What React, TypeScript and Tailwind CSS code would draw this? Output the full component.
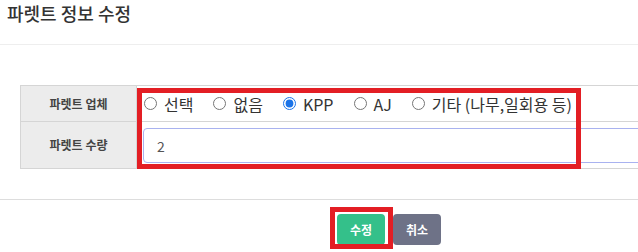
import React from "react";

const font = { fontFamily: '"Noto Sans CJK KR", "Noto Sans", sans-serif' };

function Radio({ label, checked }: { label: string; checked?: boolean }) {
  return (
    <label className="flex items-center mr-[20px]">
      <input
        type="radio"
        name="vendor"
        defaultChecked={checked}
        className="m-0 w-[13px] h-[13px] accent-[#1a73e8]"
      />
      <span className="ml-[7px] text-[16px] text-[#333] leading-[20px]">{label}</span>
    </label>
  );
}

export default function App() {
  return (
    <div className="w-[638px] h-[252px] overflow-hidden bg-white relative" style={font}>
      <div className="w-[778px]">
        <div className="h-[45px] border-b border-[#eeeeee] pl-[7px]">
          <h1 className="text-[18px] leading-[26px] text-[#333] font-medium">파렛트 정보 수정</h1>
        </div>
        <div className="pt-[40px] pl-[20px]">
          <div className="border border-[#d5d5d5] border-r-0">
            <div className="flex h-[36px] border-b border-[#d5d5d5]">
              <div className="w-[116px] shrink-0 bg-[#ececec] border-r border-[#d5d5d5] flex items-center justify-center text-[12px] font-bold text-[#444]">
                파렛트 업체
              </div>
              <div className="flex items-center pl-[7px]">
                <Radio label="선택" />
                <Radio label="없음" />
                <Radio label="KPP" checked />
                <Radio label="AJ" />
                <Radio label="기타 (나무,일회용 등)" />
              </div>
            </div>
            <div className="flex h-[46px]">
              <div className="w-[116px] shrink-0 bg-[#ececec] border-r border-[#d5d5d5] flex items-center justify-center text-[12px] font-bold text-[#444]">
                파렛트 수량
              </div>
              <div className="flex-1 pt-[6px] pb-[5px] pl-[6px]">
                <input
                  type="text"
                  defaultValue="2"
                  className="w-full h-[35px] border border-[#a9b2f0] rounded-[4px] pl-[13px] text-[14px] text-[#555] outline-none"
                  style={font}
                />
              </div>
            </div>
          </div>
        </div>
        <div className="mt-[30px] border-t border-[#dddddd] pt-[14px] flex justify-center gap-[8px]">
          <button className="w-[48px] h-[31px] rounded-[4px] bg-[#34c08a] text-white text-[12px] font-bold">수정</button>
          <button className="w-[48px] h-[31px] rounded-[4px] bg-[#6e7287] text-white text-[12px] font-bold">취소</button>
        </div>
      </div>
      <div className="absolute left-[137px] top-[88px] w-[444px] h-[81px] border-[5px] border-[#e31e24]" />
      <div className="absolute left-[330px] top-[207px] w-[63px] h-[42px] border-[5px] border-[#e31e24]" />
    </div>
  );
}
